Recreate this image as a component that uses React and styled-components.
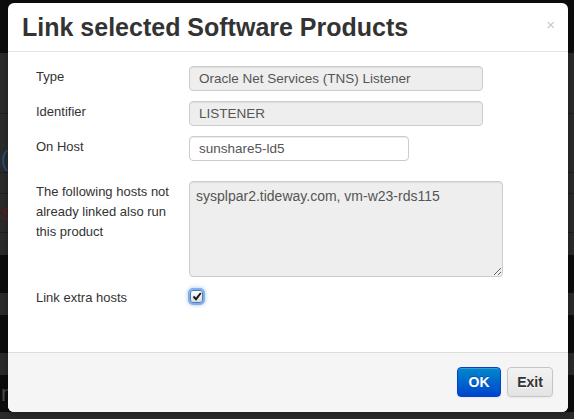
import React from 'react';
import styled, { createGlobalStyle } from 'styled-components';

const GlobalStyle = createGlobalStyle`
    html, body {
        margin: 0;
        padding: 0;
        height: 419px;
        overflow: hidden;
        background: #2b2b2b;
        font-family: "Helvetica Neue", Helvetica, "Liberation Sans", Arial, sans-serif;
    }
`;

const Page = styled.div`
    position: relative;
    width: 574px;
    height: 419px;
    display: flex;
    flex-direction: column;
`;

const Band = styled.div`
    height: ${(p) => p.h}px;
    flex: ${(p) => (p.h ? 'none' : '1')};
    background: ${(p) => (p.dark ? '#0c0c0c' : '#2b2b2b')};
    border-top: ${(p) => (p.line ? '1px solid #1f1f1f' : 'none')};
    box-sizing: border-box;
    display: flex;
    align-items: ${(p) => p.align || 'center'};
    padding-left: 1px;
    font-size: 22px;
    color: ${(p) => p.color || '#555'};
`;

const Modal = styled.div`
    position: absolute;
    left: 8px;
    top: 3px;
    width: 560px;
    height: 409px;
    background: #fff;
    border-radius: 6px;
    display: flex;
    flex-direction: column;
    overflow: hidden;
    box-shadow: 0 3px 7px rgba(0, 0, 0, 0.3);
`;

const Header = styled.div`
    padding: 9px 15px 9px 14px;
    border-bottom: 1px solid #e5e5e5;
    display: flex;
    align-items: center;
    justify-content: space-between;
`;

const Title = styled.h3`
    margin: 0;
    font-size: 25px;
    line-height: 30px;
    font-weight: bold;
    color: #333;
`;

const Close = styled.span`
    font-size: 15px;
    color: #c8c8c8;
    margin-right: -2px;
    margin-top: -6px;
`;

const Body = styled.div`
    flex: 1;
    padding: 14px 20px 14px 28px;
`;

const Form = styled.div`
    display: grid;
    grid-template-columns: 153px 1fr;
    row-gap: 10px;
    align-items: start;
`;

const Label = styled.div`
    width: 140px;
    font-size: 13px;
    line-height: 20px;
    color: #333;
    padding-top: 1px;
    margin-top: ${(p) => p.mt || 0}px;
`;

const Field = styled.div`
    width: ${(p) => p.w}px;
    height: 25px;
    box-sizing: border-box;
    border: 1px solid #ccc;
    border-radius: 4px;
    background: ${(p) => (p.disabled ? '#eee' : '#fff')};
    box-shadow: inset 0 1px 1px rgba(0, 0, 0, 0.075);
    padding: 0 9px;
    font-size: 13.5px;
    line-height: 23px;
    color: #555;
    white-space: nowrap;
`;

const TextArea = styled.textarea`
    width: 314px;
    height: 96px;
    box-sizing: border-box;
    margin: 10px 0 0;
    border: 1px solid #ccc;
    border-radius: 4px;
    background: #eee;
    box-shadow: inset 0 1px 1px rgba(0, 0, 0, 0.075);
    padding: 4px 6px;
    font-family: inherit;
    font-size: 14px;
    line-height: 20px;
    color: #555;
    outline: none;
    display: block;
`;

const Check = styled.span`
    display: flex;
    align-items: center;
    justify-content: center;
    width: 13px;
    height: 13px;
    margin: 3px 0 0 1px;
    box-sizing: border-box;
    border: 1px solid #4a7cc0;
    border-radius: 3px;
    background: linear-gradient(#fff, #dcdcdc);
    box-shadow: 0 0 0 2px rgba(110, 160, 225, 0.75), 0 0 4px 2px rgba(80, 140, 220, 0.5);
`;

const Footer = styled.div`
    border-top: 1px solid #ddd;
    background: #f5f5f5;
    padding: 14px 15px 15px;
    display: flex;
    justify-content: flex-end;
    gap: 6px;
`;

const Button = styled.button`
    width: ${(p) => (p.primary ? 44 : 46)}px;
    height: 30px;
    padding: 0;
    border-radius: 4px;
    font-family: inherit;
    font-size: 14px;
    font-weight: bold;
    cursor: pointer;
    color: ${(p) => (p.primary ? '#fff' : '#333')};
    border: 1px solid ${(p) => (p.primary ? '#0044cc' : '#c5c5c5')};
    background: ${(p) =>
        p.primary ? 'linear-gradient(#0088cc, #0044cc)' : 'linear-gradient(#f2f2f2, #e4e4e4)'};
    text-shadow: ${(p) => (p.primary ? '0 -1px 0 rgba(0,0,0,0.25)' : '0 1px 1px rgba(255,255,255,0.75)')};
    box-shadow: inset 0 1px 0 rgba(255, 255, 255, 0.2), 0 1px 2px rgba(0, 0, 0, 0.05);
`;

const bands = [
    { h: 53, dark: true },
    { h: 60 },
    { h: 59, line: true, text: '(', color: '#1d4f7c', align: 'flex-end' },
    { h: 21, line: true },
    { h: 39, line: true, text: 's', color: '#5c1c1c' },
    { h: 23, line: true },
    { h: 38, dark: true },
    { h: 22 },
    { h: 38, dark: true },
    { h: 22 },
    { h: 37, dark: true, text: 'n', color: '#4a4a4a' },
    {},
];

const App = () => (
    <Page>
        <GlobalStyle />
        {bands.map((b, i) => (
            <Band key={i} {...b}>
                {b.text}
            </Band>
        ))}
        <Modal>
            <Header>
                <Title>Link selected Software Products</Title>
                <Close>×</Close>
            </Header>
            <Body>
                <Form>
                    <Label>Type</Label>
                    <Field w={294} disabled>Oracle Net Services (TNS) Listener</Field>
                    <Label>Identifier</Label>
                    <Field w={294} disabled>LISTENER</Field>
                    <Label>On Host</Label>
                    <Field w={220}>sunshare5-ld5</Field>
                    <Label mt={10}>The following hosts not already linked also run this product</Label>
                    <TextArea readOnly value="sysplpar2.tideway.com, vm-w23-rds115" />
                    <Label>Link extra hosts</Label>
                    <Check>
                        <svg width="10" height="9" viewBox="0 0 10 9">
                            <path d="M1.5 4.5 L4 7.2 L8.8 1" fill="none" stroke="#1a1a1a" strokeWidth="2" />
                        </svg>
                    </Check>
                </Form>
            </Body>
            <Footer>
                <Button primary>OK</Button>
                <Button>Exit</Button>
            </Footer>
        </Modal>
    </Page>
);

export default App;
